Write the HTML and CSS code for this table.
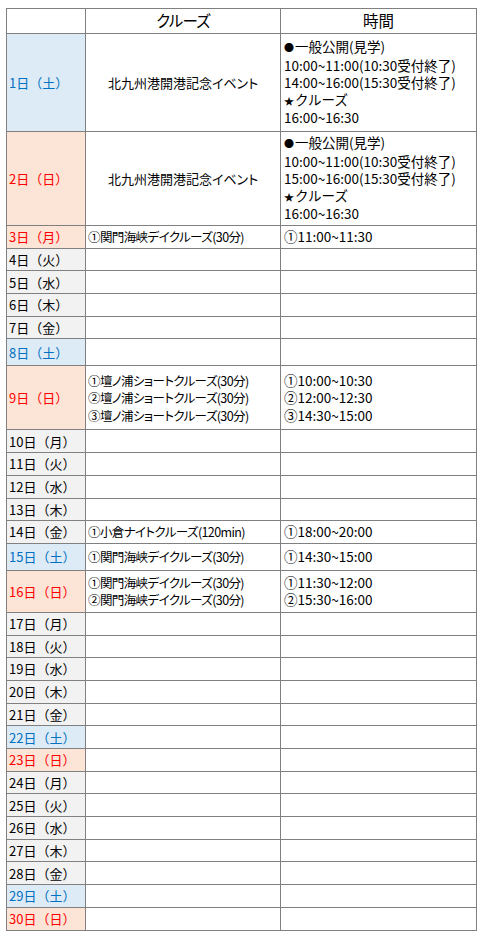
FILE: index.html
```html
<!DOCTYPE html>
<html lang="ja">
<head>
<meta charset="utf-8">
<title>クルーズ日程</title>
<link rel="stylesheet" href="styles.css">
</head>
<body>
<div class="schedule">
  <div class="cell head h24"></div>
  <div class="cell head kana">クルーズ</div>
  <div class="cell head">時間</div>

  <div class="cell date sat h97">1日（土）</div>
  <div class="cell event">北九州港開港記念イベント</div>
  <div class="cell time"><div><span class="mark">●</span>一般公開(見学)<br>10:00~11:00(10:30受付終了)<br>14:00~16:00(15:30受付終了)<br><span class="mark">★</span>クルーズ<br>16:00~16:30</div></div>

  <div class="cell date sun h93">2日（日）</div>
  <div class="cell event">北九州港開港記念イベント</div>
  <div class="cell time"><div><span class="mark">●</span>一般公開(見学)<br>10:00~11:00(10:30受付終了)<br>15:00~16:00(15:30受付終了)<br><span class="mark">★</span>クルーズ<br>16:00~16:30</div></div>

  <div class="cell date sun">3日（月）</div>
  <div class="cell cruise"><div>①関門海峡デイクルーズ(30分)</div></div>
  <div class="cell time"><div>①11:00~11:30</div></div>

  <div class="cell date">4日（火）</div><div class="cell"></div><div class="cell"></div>
  <div class="cell date">5日（水）</div><div class="cell"></div><div class="cell"></div>
  <div class="cell date">6日（木）</div><div class="cell"></div><div class="cell"></div>
  <div class="cell date">7日（金）</div><div class="cell"></div><div class="cell"></div>
  <div class="cell date sat h26">8日（土）</div><div class="cell"></div><div class="cell"></div>

  <div class="cell date sun h63">9日（日）</div>
  <div class="cell cruise"><div>①壇ノ浦ショートクルーズ(30分)<br>②壇ノ浦ショートクルーズ(30分)<br>③壇ノ浦ショートクルーズ(30分)</div></div>
  <div class="cell time"><div>①10:00~10:30<br>②12:00~12:30<br>③14:30~15:00</div></div>

  <div class="cell date">10日（月）</div><div class="cell"></div><div class="cell"></div>
  <div class="cell date">11日（火）</div><div class="cell"></div><div class="cell"></div>
  <div class="cell date">12日（水）</div><div class="cell"></div><div class="cell"></div>
  <div class="cell date">13日（木）</div><div class="cell"></div><div class="cell"></div>

  <div class="cell date">14日（金）</div>
  <div class="cell cruise"><div>①小倉ナイトクルーズ(120min)</div></div>
  <div class="cell time"><div>①18:00~20:00</div></div>

  <div class="cell date sat h26">15日（土）</div>
  <div class="cell cruise"><div>①関門海峡デイクルーズ(30分)</div></div>
  <div class="cell time"><div>①14:30~15:00</div></div>

  <div class="cell date sun h41">16日（日）</div>
  <div class="cell cruise"><div>①関門海峡デイクルーズ(30分)<br>②関門海峡デイクルーズ(30分)</div></div>
  <div class="cell time"><div>①11:30~12:00<br>②15:30~16:00</div></div>

  <div class="cell date">17日（月）</div><div class="cell"></div><div class="cell"></div>
  <div class="cell date">18日（火）</div><div class="cell"></div><div class="cell"></div>
  <div class="cell date">19日（水）</div><div class="cell"></div><div class="cell"></div>
  <div class="cell date">20日（木）</div><div class="cell"></div><div class="cell"></div>
  <div class="cell date">21日（金）</div><div class="cell"></div><div class="cell"></div>
  <div class="cell date sat">22日（土）</div><div class="cell"></div><div class="cell"></div>
  <div class="cell date sun">23日（日）</div><div class="cell"></div><div class="cell"></div>
  <div class="cell date">24日（月）</div><div class="cell"></div><div class="cell"></div>
  <div class="cell date">25日（火）</div><div class="cell"></div><div class="cell"></div>
  <div class="cell date">26日（水）</div><div class="cell"></div><div class="cell"></div>
  <div class="cell date">27日（木）</div><div class="cell"></div><div class="cell"></div>
  <div class="cell date">28日（金）</div><div class="cell"></div><div class="cell"></div>
  <div class="cell date sat">29日（土）</div><div class="cell"></div><div class="cell"></div>
  <div class="cell date sun">30日（日）</div><div class="cell"></div><div class="cell"></div>
</div>
</body>
</html>
```

FILE: styles.css
```css
html, body {
  background: #ffffff;
}

body {
  margin: 8px 6px;
  font-family: "Noto Sans CJK JP", "Noto Sans", sans-serif;
  font-size: 13px;
  color: #000000;
}

.schedule {
  display: grid;
  grid-template-columns: 78px 194px 195px;
  grid-auto-rows: minmax(21.7px, auto);
  gap: 1px;
  width: 469px;
  background: #808080;
  border: 1px solid #808080;
}

.cell {
  background: #ffffff;
  line-height: 17.3px;
  padding: 0 2px;
  display: flex;
  align-items: center;
  white-space: nowrap;
}

.head {
  justify-content: center;
  font-size: 15.5px;
}

.head.kana {
  font-feature-settings: "palt";
  letter-spacing: -0.8px;
}

.date {
  background: #f2f2f2;
  padding-left: 2px;
}

.date.sat {
  background: #ddebf7;
  color: #0070c0;
}

.date.sun {
  background: #fce4d6;
  color: #ff0000;
}

.event {
  justify-content: center;
  font-feature-settings: "palt";
}

.cruise {
  font-size: 12.5px;
  font-feature-settings: "palt";
  letter-spacing: -0.6px;
}

.time {
  padding-left: 3px;
  font-size: 13.5px;
}

.time .mark {
  font-size: 10px;
  margin-right: 1px;
}

.h24 { min-height: 24px; }
.h97 { min-height: 97px; }
.h93 { min-height: 93px; }
.h26 { min-height: 26px; }
.h63 { min-height: 63px; }
.h41 { min-height: 41px; }
```
